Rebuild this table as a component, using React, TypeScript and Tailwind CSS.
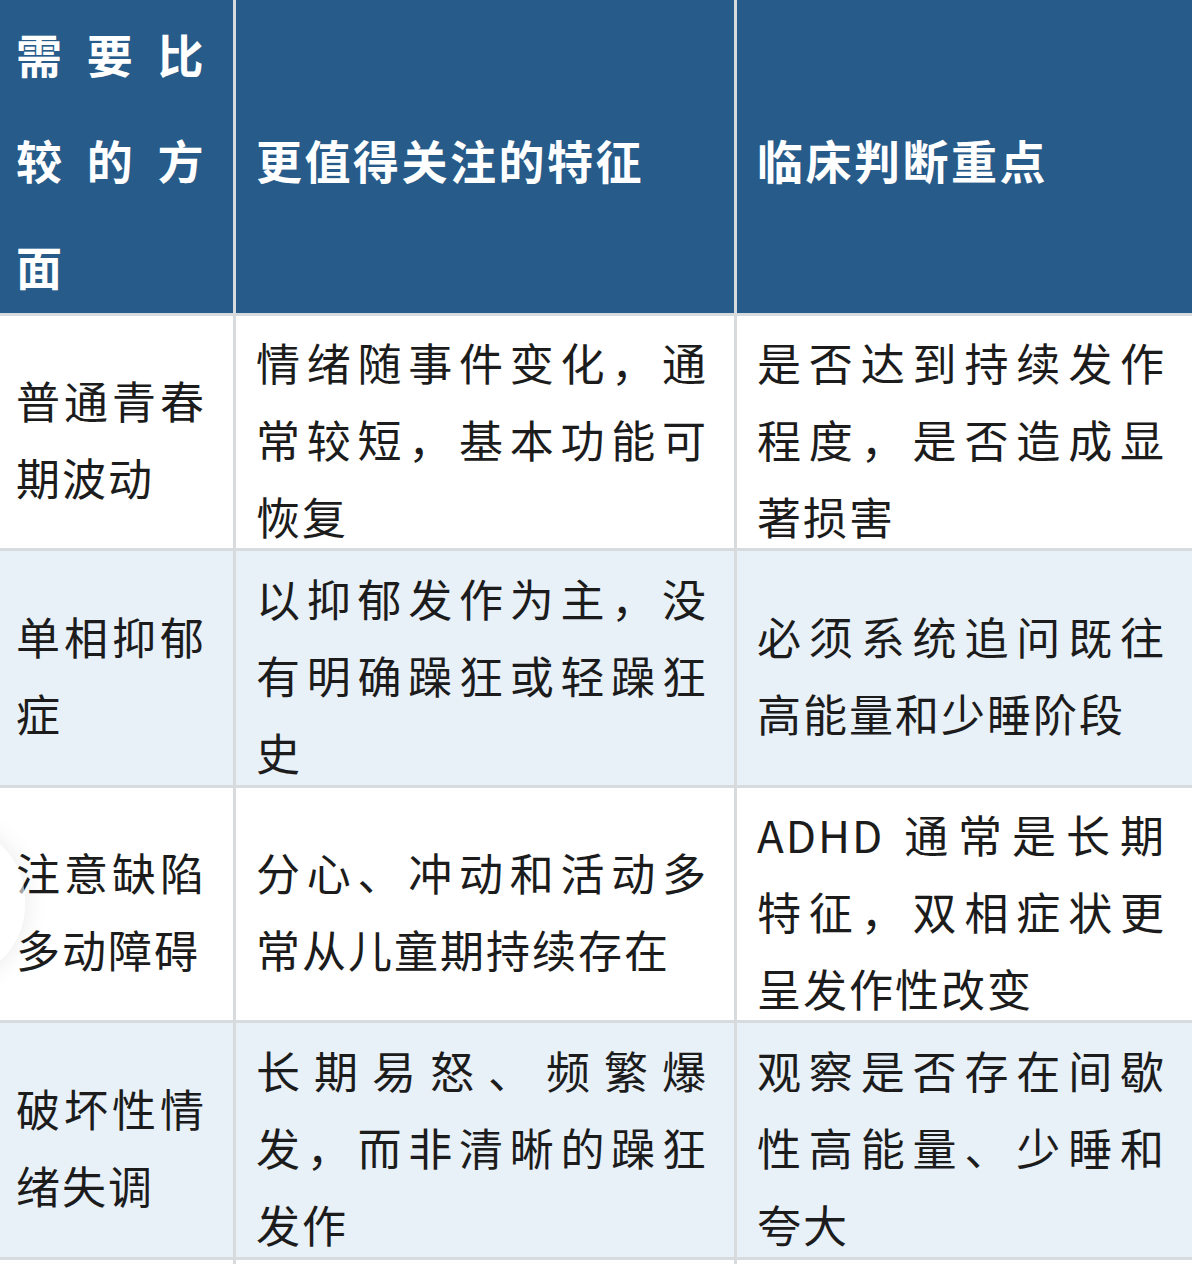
import React from 'react'

const font = { fontFamily: '"Noto Sans CJK SC", "Noto Sans", sans-serif' }

type Row = { aspect: string; feature: string; focus: string; tint: boolean }

const rows: Row[] = [
  {
    aspect: '普通青春期波动',
    feature: '情绪随事件变化，通常较短，基本功能可恢复',
    focus: '是否达到持续发作程度，是否造成显著损害',
    tint: false,
  },
  {
    aspect: '单相抑郁症',
    feature: '以抑郁发作为主，没有明确躁狂或轻躁狂史',
    focus: '必须系统追问既往高能量和少睡阶段',
    tint: true,
  },
  {
    aspect: '注意缺陷多动障碍',
    feature: '分心、冲动和活动多常从儿童期持续存在',
    focus: 'ADHD 通常是长期特征，双相症状更呈发作性改变',
    tint: false,
  },
  {
    aspect: '破坏性情绪失调',
    feature: '长期易怒、频繁爆发，而非清晰的躁狂发作',
    focus: '观察是否存在间歇性高能量、少睡和夸大',
    tint: true,
  },
]

function HeadCell({ children, first }: { children: React.ReactNode; first?: boolean }) {
  return (
    <div
      className={`flex flex-col justify-center bg-[#275b89] pt-[4px] text-white ${
        first ? 'pl-[16px] pr-[27px]' : 'pl-[20px] pr-[26px]'
      }`}
    >
      <div className="text-justify text-[46px] font-bold leading-[106px] tracking-[2.5px]">{children}</div>
    </div>
  )
}

function BodyCell({ children, tint, first }: { children: React.ReactNode; tint: boolean; first?: boolean }) {
  return (
    <div
      className={`flex flex-col justify-center pt-[14px] ${tint ? 'bg-[#e8f0f8]' : 'bg-white'} ${
        first ? 'pl-[16px] pr-[27px]' : 'pl-[20px] pr-[26px]'
      }`}
    >
      <div className="text-justify text-[44px] leading-[77px] tracking-[2px] text-[#1c1c1c]">{children}</div>
    </div>
  )
}

export default function App() {
  return (
    <div className="relative h-[1264px] w-[1192px] overflow-hidden bg-white" style={font}>
      <div className="grid grid-cols-[233px_498px_455px] grid-rows-[313px_232px_234px_232px_234px_60px] gap-[3px] bg-[#d8dbde]">
        <HeadCell first>需要比较的方面</HeadCell>
        <HeadCell>更值得关注的特征</HeadCell>
        <HeadCell>临床判断重点</HeadCell>
        {rows.map((r) => (
          <React.Fragment key={r.aspect}>
            <BodyCell tint={r.tint} first>
              {r.aspect}
            </BodyCell>
            <BodyCell tint={r.tint}>{r.feature}</BodyCell>
            <BodyCell tint={r.tint}>{r.focus}</BodyCell>
          </React.Fragment>
        ))}
        <div className="bg-white" />
        <div className="bg-white" />
        <div className="bg-white" />
      </div>
      {/* faint floating button peeking in from the left edge */}
      <div className="pointer-events-none absolute left-[-125px] top-[825px] h-[155px] w-[150px] rounded-full bg-white/60 shadow-[0_0_26px_rgba(0,0,0,0.09)]" />
    </div>
  )
}
